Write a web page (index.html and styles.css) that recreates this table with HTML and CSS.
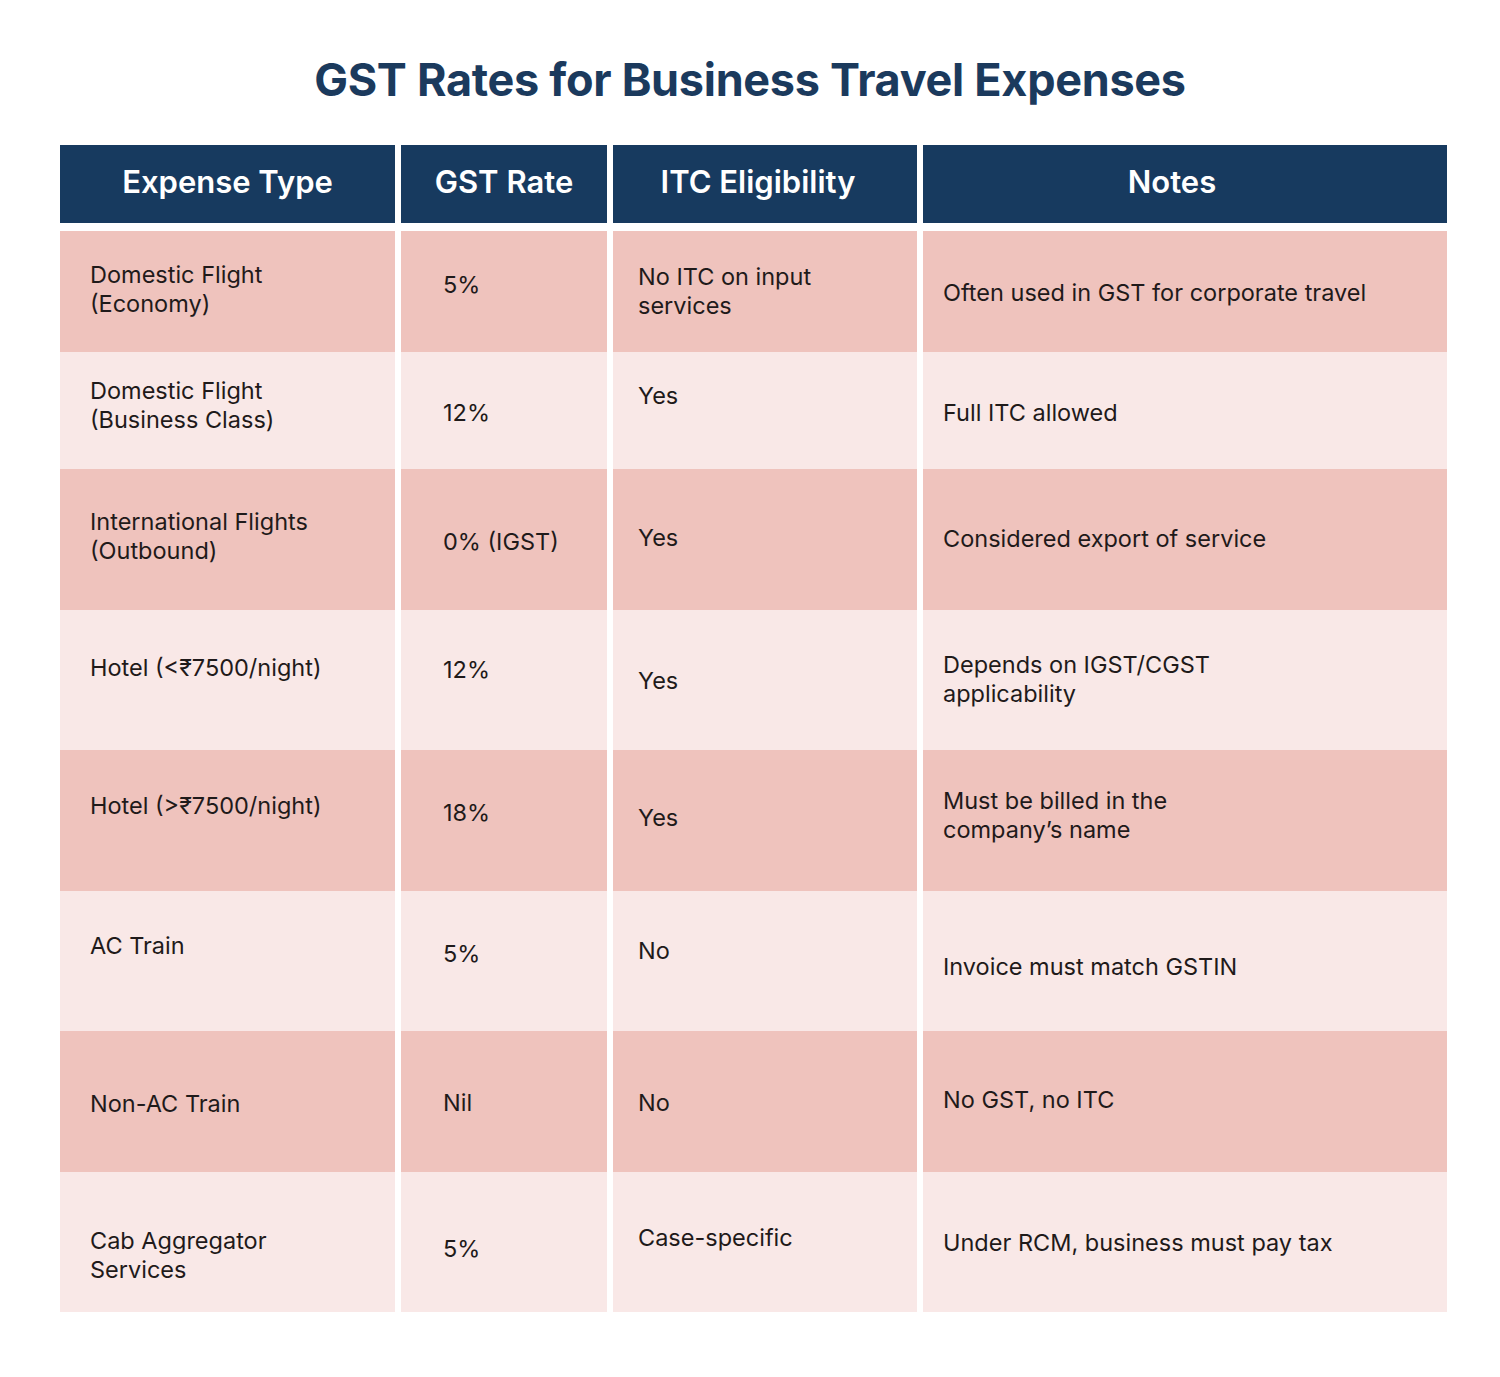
FILE: index.html
```html
<!DOCTYPE html>
<html lang="en">
<head>
<meta charset="utf-8">
<title>GST Rates for Business Travel Expenses</title>
<link rel="stylesheet" href="styles.css">
</head>
<body>
<main class="page">
  <h1 class="title">GST Rates for Business Travel Expenses</h1>
  <div class="table">
    <div class="row head">
      <div class="th">Expense Type</div>
      <div class="th">GST Rate</div>
      <div class="th th-itc">ITC Eligibility</div>
      <div class="th th-notes">Notes</div>
    </div>
    <div class="body">
      <div class="row dark h121">
        <div class="td c1 p30">Domestic Flight<br>(Economy)</div>
        <div class="td c2 p40">5%</div>
        <div class="td c3 p32">No ITC on input<br>services</div>
        <div class="td c4 p48">Often used in GST for corporate travel</div>
      </div>
      <div class="row light h117">
        <div class="td c1 p25">Domestic Flight<br>(Business Class)</div>
        <div class="td c2 p47">12%</div>
        <div class="td c3 p30">Yes</div>
        <div class="td c4 p47">Full ITC allowed</div>
      </div>
      <div class="row dark h141">
        <div class="td c1 p39">International Flights<br>(Outbound)</div>
        <div class="td c2 p59">0% (IGST)</div>
        <div class="td c3 p55">Yes</div>
        <div class="td c4 p56">Considered export of service</div>
      </div>
      <div class="row light h140">
        <div class="td c1 p44">Hotel (&lt;₹7500/night)</div>
        <div class="td c2 p46">12%</div>
        <div class="td c3 p57">Yes</div>
        <div class="td c4 p41">Depends on IGST/CGST<br>applicability</div>
      </div>
      <div class="row dark h141">
        <div class="td c1 p42">Hotel (&gt;₹7500/night)</div>
        <div class="td c2 p49">18%</div>
        <div class="td c3 p54">Yes</div>
        <div class="td c4 p37">Must be billed in the<br>company’s name</div>
      </div>
      <div class="row light h140">
        <div class="td c1 p41">AC Train</div>
        <div class="td c2 p49">5%</div>
        <div class="td c3 p46">No</div>
        <div class="td c4 p62">Invoice must match GSTIN</div>
      </div>
      <div class="row dark h141">
        <div class="td c1 p59">Non-AC Train</div>
        <div class="td c2 p58">Nil</div>
        <div class="td c3 p58">No</div>
        <div class="td c4 p55">No GST, no ITC</div>
      </div>
      <div class="row light h140">
        <div class="td c1 p55">Cab Aggregator<br>Services</div>
        <div class="td c2 p63">5%</div>
        <div class="td c3 p52">Case-specific</div>
        <div class="td c4 p57">Under RCM, business must pay tax</div>
      </div>
    </div>
  </div>
</main>
</body>
</html>
```
FILE: styles.css
```css
html, body {
  margin: 0;
  padding: 0;
  background: #ffffff;
}

.page {
  width: 1500px;
  min-height: 1377px;
  box-sizing: border-box;
  padding: 52px 0 0 0;
  font-family: Inter, "Noto Sans", "Liberation Sans", sans-serif;
}

.title {
  margin: 0;
  text-align: center;
  font-size: 45px;
  line-height: 56px;
  font-weight: 700;
  color: #1b3a5d;
  letter-spacing: -0.3px;
}

.table {
  margin: 37px 0 0 60px;
  width: 1387px;
}

.row {
  display: grid;
  grid-template-columns: 335px 206px 304px 524px;
  column-gap: 6px;
}

.head {
  height: 78px;
  margin-bottom: 8px;
}

.th {
  background: #173a5f;
  color: #ffffff;
  font-size: 31px;
  font-weight: 600;
  display: flex;
  align-items: center;
  justify-content: center;
  padding-bottom: 6px;
  box-sizing: border-box;
}

.th-itc { padding-right: 14px; }
.th-notes { padding-right: 26px; }

.td {
  font-size: 23.5px;
  line-height: 29px;
  color: #1f1a1a;
  box-sizing: border-box;
}

.dark .td { background: #efc3bd; }
.light .td { background: #f9e8e7; }

.h117 { height: 117px; }
.h121 { height: 121px; }
.h140 { height: 140px; }
.h141 { height: 141px; }

.c1 { padding-left: 30px; }
.c2 { padding-left: 42px; }
.c3 { padding-left: 25px; }
.c4 { padding-left: 20px; }

.p25 { padding-top: 24px; }
.p30 { padding-top: 29px; }
.p32 { padding-top: 31px; }
.p37 { padding-top: 36px; }
.p39 { padding-top: 38px; }
.p40 { padding-top: 39px; }
.p41 { padding-top: 40px; }
.p42 { padding-top: 41px; }
.p44 { padding-top: 43px; }
.p46 { padding-top: 45px; }
.p47 { padding-top: 46px; }
.p48 { padding-top: 47px; }
.p49 { padding-top: 48px; }
.p52 { padding-top: 51px; }
.p54 { padding-top: 53px; }
.p55 { padding-top: 54px; }
.p56 { padding-top: 55px; }
.p57 { padding-top: 56px; }
.p58 { padding-top: 57px; }
.p59 { padding-top: 58px; }
.p62 { padding-top: 61px; }
.p63 { padding-top: 62px; }
```
